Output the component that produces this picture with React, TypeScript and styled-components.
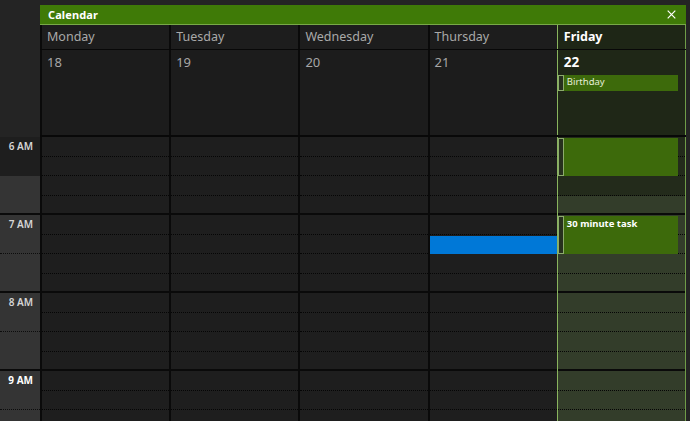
import React from "react";
import styled, { createGlobalStyle, css } from "styled-components";

const Global = createGlobalStyle`
  html, body { margin: 0; padding: 0; background: #242424; }
  body { font-family: "Noto Sans", "Open Sans", sans-serif; }
  * { box-sizing: border-box; }
`;

const SLOT = 19.5;
const HOUR = SLOT * 4;

const Page = styled.div`
  width: 690px;
  height: 421px;
  overflow: hidden;
  background: #242424;
  padding-top: 5px;
  display: flex;
  flex-direction: column;
`;

const Top = styled.div`
  display: flex;
  padding-left: 40px;
`;

const Window = styled.div`
  width: 646px;
  display: flex;
  flex-direction: column;
`;

const TitleBar = styled.div`
  height: 20px;
  background: #3f7a07;
  border-bottom: 1px solid #78a948;
  display: flex;
  align-items: center;
  justify-content: space-between;
  padding: 0 10px 0 8px;
`;

const Title = styled.span`
  color: #ffffff;
  font-weight: 700;
  font-size: 11px;
  letter-spacing: 0.1px;
`;

const CloseBtn = styled.svg`
  width: 9px;
  height: 9px;
  display: block;
`;

const Columns = styled.div<{ $h?: number; $border?: number }>`
  display: grid;
  grid-template-columns: repeat(5, 1fr);
  ${(p) =>
    p.$h !== undefined &&
    css`
      height: ${p.$h}px;
    `}
  ${(p) =>
    p.$border !== undefined &&
    css`
      border-bottom: ${p.$border}px solid #080808;
    `}
`;

const cellBorders = css<{ $today?: boolean }>`
  border-left: ${(p) => (p.$today ? "1px solid #89b45e" : "2px solid #0a0a0a")};
  border-right: ${(p) => (p.$today ? "1px solid #6f9c48" : "none")};
`;

const DayHead = styled.div<{ $today?: boolean }>`
  ${cellBorders};
  background: ${(p) => (p.$today ? "#1e2616" : "#1d1d1d")};
  color: ${(p) => (p.$today ? "#ffffff" : "#a9a9a9")};
  font-weight: ${(p) => (p.$today ? 700 : 400)};
  font-size: 12.5px;
  display: flex;
  align-items: center;
  padding-left: ${(p) => (p.$today ? 6 : 5)}px;
  padding-bottom: 1px;
`;

const AllDayCell = styled.div<{ $today?: boolean }>`
  ${cellBorders};
  background: ${(p) => (p.$today ? "#1f2717" : "#1c1c1c")};
  padding-top: 3px;
  display: flex;
  flex-direction: column;
`;

const DateNum = styled.div<{ $today?: boolean }>`
  height: 18px;
  line-height: 18px;
  font-size: ${(p) => (p.$today ? 13.5 : 13)}px;
  font-weight: ${(p) => (p.$today ? 700 : 400)};
  color: ${(p) => (p.$today ? "#ffffff" : "#a6a6a6")};
  padding-left: ${(p) => (p.$today ? 6 : 5)}px;
`;

const AllDayEvent = styled.div`
  margin-top: 4px;
  margin-right: 7px;
  height: 16px;
  display: flex;
`;

const Strip = styled.div`
  width: 6px;
  flex: 0 0 6px;
  border: 1px solid #8cab6c;
  background: #27301e;
`;

const EventBody = styled.div<{ $bold?: boolean }>`
  flex: 1;
  background: #3d6a0b;
  color: ${(p) => (p.$bold ? "#ffffff" : "#e6efd9")};
  font-size: 9.5px;
  font-weight: ${(p) => (p.$bold ? 700 : 400)};
  padding: ${(p) => (p.$bold ? "2px 3px" : "1px 3px")};
  line-height: 12px;
  white-space: nowrap;
  overflow: hidden;
`;

const Bottom = styled.div`
  display: flex;
  flex: 1;
`;

const Gutter = styled.div`
  width: 40px;
  flex: 0 0 40px;
  display: flex;
  flex-direction: column;
`;

const GutterSlot = styled.div<{ $dark?: boolean; $hourEnd?: boolean }>`
  height: ${SLOT * 2}px;
  flex: 0 0 ${SLOT * 2}px;
  background: ${(p) => (p.$dark ? "#1e1e1e" : "#343434")};
  border-bottom: ${(p) => (p.$hourEnd ? "2px solid #0a0a0a" : p.$dark ? "none" : "1px dotted #0c0c0c")};
  text-align: right;
  padding: 3px 7px 0 0;
  font-size: 10px;
  line-height: 12px;
`;

const HourLabel = styled.span<{ $strong?: boolean }>`
  font-size: 10px;
  line-height: 12px;
  font-weight: ${(p) => (p.$strong ? 700 : 600)};
  color: ${(p) => (p.$strong ? "#ffffff" : "#d6d6d6")};
`;

const DayColumn = styled.div<{ $today?: boolean }>`
  ${cellBorders};
  position: relative;
  display: flex;
  flex-direction: column;
`;

const Slot = styled.div<{ $bg: string; $hourEnd?: boolean }>`
  height: ${SLOT}px;
  flex: 0 0 ${SLOT}px;
  background: ${(p) => p.$bg};
  border-bottom: ${(p) => (p.$hourEnd ? "2px solid #0a0a0a" : "1px dotted #050505")};
`;

const TimedEvent = styled.div`
  position: absolute;
  left: 0;
  right: 7px;
  display: flex;
`;

const BusyBar = styled.div`
  position: absolute;
  left: 0;
  right: 0;
  background: #0078d7;
`;

const days = [
  { name: "Monday", date: "18" },
  { name: "Tuesday", date: "19" },
  { name: "Wednesday", date: "20" },
  { name: "Thursday", date: "21" },
  { name: "Friday", date: "22", today: true },
];

const hours = ["6 AM", "7 AM", "8 AM", "9 AM"];
const SLOTS = hours.length * 4;

const minutesTop = (h: number, m: number) => ((h - 6) * 60 + m) * (HOUR / 60);

export default function App() {
  return (
    <>
      <Global />
      <Page>
        <Top>
          <Window>
            <TitleBar>
              <Title>Calendar</Title>
              <CloseBtn viewBox="0 0 9 9">
                <path d="M0.7 0.7 L8.3 8.3 M8.3 0.7 L0.7 8.3" stroke="#ffffff" strokeWidth="1.2" fill="none" />
              </CloseBtn>
            </TitleBar>
            <Columns $h={25} $border={1}>
              {days.map((d) => (
                <DayHead key={d.name} $today={d.today}>
                  {d.name}
                </DayHead>
              ))}
            </Columns>
            <Columns $h={87} $border={2}>
              {days.map((d) => (
                <AllDayCell key={d.name} $today={d.today}>
                  <DateNum $today={d.today}>{d.date}</DateNum>
                  {d.today && (
                    <AllDayEvent>
                      <Strip />
                      <EventBody>Birthday</EventBody>
                    </AllDayEvent>
                  )}
                </AllDayCell>
              ))}
            </Columns>
          </Window>
        </Top>
        <Bottom>
          <Gutter>
            {hours.map((h, i) => (
              <React.Fragment key={h}>
                <GutterSlot $dark={i === 0}>
                  <HourLabel $strong={h === "9 AM"}>{h}</HourLabel>
                </GutterSlot>
                <GutterSlot $hourEnd />
              </React.Fragment>
            ))}
          </Gutter>
          <Window>
            <Columns>
              {days.map((d) => (
                <DayColumn key={d.name} $today={d.today}>
                  {Array.from({ length: SLOTS }).map((_, s) => (
                    <Slot
                      key={s}
                      $hourEnd={s % 4 === 3}
                      $bg={d.today ? (s < 3 ? "#232b1b" : "#333d2a") : "#1e1e1e"}
                    />
                  ))}
                  {d.name === "Thursday" && (
                    <BusyBar style={{ top: minutesTop(7, 15) + 1, height: SLOT - 1 }} />
                  )}
                  {d.today && (
                    <>
                      <TimedEvent style={{ top: minutesTop(6, 0) + 1, height: SLOT * 2 - 1 }}>
                        <Strip />
                        <EventBody $bold />
                      </TimedEvent>
                      <TimedEvent style={{ top: minutesTop(7, 0) + 1, height: SLOT * 2 - 1 }}>
                        <Strip />
                        <EventBody $bold>30 minute task</EventBody>
                      </TimedEvent>
                    </>
                  )}
                </DayColumn>
              ))}
            </Columns>
          </Window>
        </Bottom>
      </Page>
    </>
  );
}
